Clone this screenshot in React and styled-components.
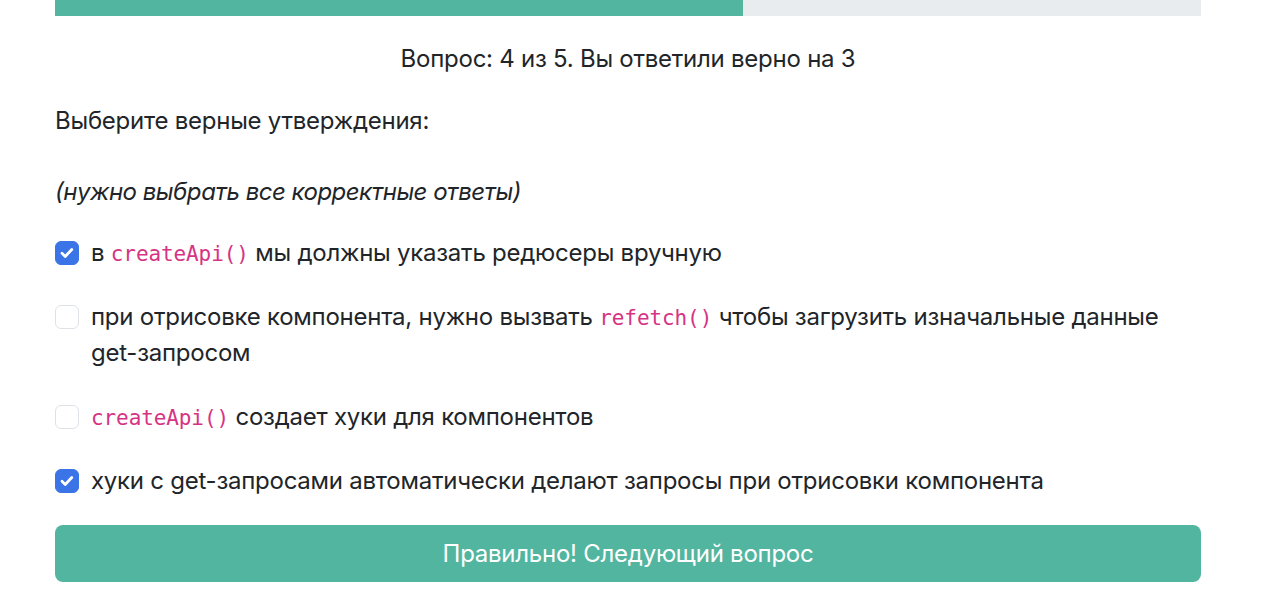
import React from "react";
import styled, { createGlobalStyle } from "styled-components";

const Global = createGlobalStyle`
  html, body { margin: 0; padding: 0; background: #fff; }
  body { font-family: Inter, "Noto Sans", sans-serif; color: #212529; }
`;

const Page = styled.div`
  width: 1146px;
  padding-left: 55px;
  display: flex;
  flex-direction: column;
  letter-spacing: -0.25px;
`;

const Progress = styled.div`
  height: 16px;
  background: #e9ecef;
  display: flex;
`;

const Fill = styled.div`
  background: #52b5a0;
  height: 100%;
`;

const Status = styled.div`
  margin-top: 25px;
  font-size: 24px;
  line-height: 36px;
  text-align: center;
`;

const Prompt = styled.div`
  margin-top: 26px;
  font-size: 24px;
  line-height: 36px;
`;

const Hint = styled.div`
  margin-top: 35px;
  font-size: 24px;
  line-height: 36px;
  font-style: italic;
  letter-spacing: -0.5px;
`;

const Options = styled.div`
  margin-top: 25px;
  display: flex;
  flex-direction: column;
  gap: 28px;
`;

const Option = styled.label`
  display: flex;
  align-items: flex-start;
  gap: 12px;
  font-size: 24px;
  line-height: 36px;
`;

const Box = styled.span`
  flex: none;
  width: 24px;
  height: 24px;
  margin-top: 6px;
  box-sizing: border-box;
  border-radius: 6px;
  border: 1px solid ${(p) => (p.$checked ? "#3a74e7" : "#dee2e6")};
  background: ${(p) => (p.$checked ? "#3a74e7" : "#fff")};
  display: flex;
  align-items: center;
  justify-content: center;
`;

const Code = styled.code`
  font-family: "DejaVu Sans Mono", "Liberation Mono", monospace;
  font-size: 21px;
  line-height: 1;
  letter-spacing: -0.1px;
  color: #d63384;
`;

const Button = styled.button`
  margin-top: 26px;
  height: 57px;
  border: none;
  border-radius: 8px;
  background: #52b5a0;
  color: #fff;
  font-family: Inter, "Noto Sans", sans-serif;
  font-size: 24px;
  letter-spacing: -0.25px;
  cursor: pointer;
`;

const Check = () => (
  <svg width="18" height="18" viewBox="0 0 18 18">
    <path d="M4 9.3l3.2 3.1 6.6-6.8" fill="none" stroke="#fff" strokeWidth="2.8" strokeLinecap="round" strokeLinejoin="round" />
  </svg>
);

const Item = ({ checked, children }) => (
  <Option>
    <Box $checked={checked}>{checked && <Check />}</Box>
    <span>{children}</span>
  </Option>
);

export default function App() {
  return (
    <>
      <Global />
      <Page>
        <Progress>
          <Fill style={{ width: "60%" }} />
        </Progress>
        <Status>Вопрос: 4 из 5. Вы ответили верно на 3</Status>
        <Prompt>Выберите верные утверждения:</Prompt>
        <Hint>(нужно выбрать все корректные ответы)</Hint>
        <Options>
          <Item checked>
            в <Code>createApi()</Code> мы должны указать редюсеры вручную
          </Item>
          <Item>
            при отрисовке компонента, нужно вызвать <Code>refetch()</Code> чтобы загрузить изначальные данные get-запросом
          </Item>
          <Item>
            <Code>createApi()</Code> создает хуки для компонентов
          </Item>
          <Item checked>
            хуки с get-запросами автоматически делают запросы при отрисовки компонента
          </Item>
        </Options>
        <Button>Правильно! Следующий вопрос</Button>
      </Page>
    </>
  );
}
